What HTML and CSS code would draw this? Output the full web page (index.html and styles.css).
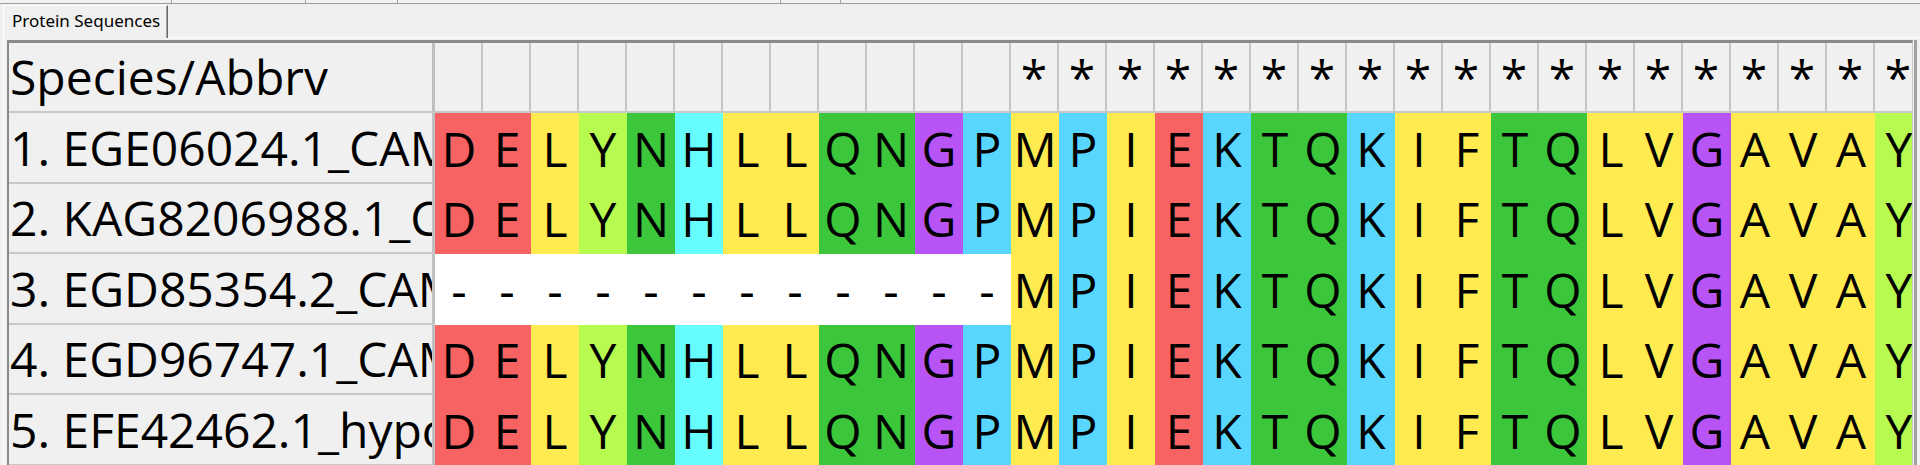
FILE: index.html
```html
<!DOCTYPE html>
<html>
<head>
<meta charset="utf-8">
<link rel="stylesheet" href="styles.css">
</head>
<body>
<div class="topstrip">
  <div class="seg s1"></div><div class="seg s2"></div><div class="seg s3"></div><div class="seg s4"></div><div class="seg s5"></div><div class="seg rest"></div>
</div>
<div class="tabbar">
  <div class="tab">Protein Sequences</div>
</div>
<div class="panel">
  <div class="grid">
    <div class="name hdr">Species/Abbrv</div>
    <div class="hc"></div><div class="hc"></div><div class="hc"></div><div class="hc"></div><div class="hc"></div><div class="hc"></div><div class="hc"></div><div class="hc"></div><div class="hc"></div><div class="hc"></div><div class="hc"></div><div class="hc"></div>
    <div class="hc">*</div><div class="hc">*</div><div class="hc">*</div><div class="hc">*</div><div class="hc">*</div><div class="hc">*</div><div class="hc">*</div><div class="hc">*</div><div class="hc">*</div><div class="hc">*</div><div class="hc">*</div><div class="hc">*</div><div class="hc">*</div><div class="hc">*</div><div class="hc">*</div><div class="hc">*</div><div class="hc">*</div><div class="hc">*</div><div class="hc">*</div>

    <div class="name">1. EGE06024.1_CAMK protein kinase</div>
    <div class="aa r">D</div><div class="aa r">E</div><div class="aa y">L</div><div class="aa yg">Y</div><div class="aa g">N</div><div class="aa c">H</div><div class="aa y">L</div><div class="aa y">L</div><div class="aa g">Q</div><div class="aa g">N</div><div class="aa p">G</div><div class="aa b">P</div><div class="aa y">M</div><div class="aa b">P</div><div class="aa y">I</div><div class="aa r">E</div><div class="aa b">K</div><div class="aa g">T</div><div class="aa g">Q</div><div class="aa b">K</div><div class="aa y">I</div><div class="aa y">F</div><div class="aa g">T</div><div class="aa g">Q</div><div class="aa y">L</div><div class="aa y">V</div><div class="aa p">G</div><div class="aa y">A</div><div class="aa y">V</div><div class="aa y">A</div><div class="aa yg">Y</div>

    <div class="name">2. KAG8206988.1_CAMK protein kinase</div>
    <div class="aa r">D</div><div class="aa r">E</div><div class="aa y">L</div><div class="aa yg">Y</div><div class="aa g">N</div><div class="aa c">H</div><div class="aa y">L</div><div class="aa y">L</div><div class="aa g">Q</div><div class="aa g">N</div><div class="aa p">G</div><div class="aa b">P</div><div class="aa y">M</div><div class="aa b">P</div><div class="aa y">I</div><div class="aa r">E</div><div class="aa b">K</div><div class="aa g">T</div><div class="aa g">Q</div><div class="aa b">K</div><div class="aa y">I</div><div class="aa y">F</div><div class="aa g">T</div><div class="aa g">Q</div><div class="aa y">L</div><div class="aa y">V</div><div class="aa p">G</div><div class="aa y">A</div><div class="aa y">V</div><div class="aa y">A</div><div class="aa yg">Y</div>

    <div class="name">3. EGD85354.2_CAMK protein kinase</div>
    <div class="aa w">-</div><div class="aa w">-</div><div class="aa w">-</div><div class="aa w">-</div><div class="aa w">-</div><div class="aa w">-</div><div class="aa w">-</div><div class="aa w">-</div><div class="aa w">-</div><div class="aa w">-</div><div class="aa w">-</div><div class="aa w">-</div><div class="aa y">M</div><div class="aa b">P</div><div class="aa y">I</div><div class="aa r">E</div><div class="aa b">K</div><div class="aa g">T</div><div class="aa g">Q</div><div class="aa b">K</div><div class="aa y">I</div><div class="aa y">F</div><div class="aa g">T</div><div class="aa g">Q</div><div class="aa y">L</div><div class="aa y">V</div><div class="aa p">G</div><div class="aa y">A</div><div class="aa y">V</div><div class="aa y">A</div><div class="aa yg">Y</div>

    <div class="name">4. EGD96747.1_CAMK protein kinase</div>
    <div class="aa r">D</div><div class="aa r">E</div><div class="aa y">L</div><div class="aa yg">Y</div><div class="aa g">N</div><div class="aa c">H</div><div class="aa y">L</div><div class="aa y">L</div><div class="aa g">Q</div><div class="aa g">N</div><div class="aa p">G</div><div class="aa b">P</div><div class="aa y">M</div><div class="aa b">P</div><div class="aa y">I</div><div class="aa r">E</div><div class="aa b">K</div><div class="aa g">T</div><div class="aa g">Q</div><div class="aa b">K</div><div class="aa y">I</div><div class="aa y">F</div><div class="aa g">T</div><div class="aa g">Q</div><div class="aa y">L</div><div class="aa y">V</div><div class="aa p">G</div><div class="aa y">A</div><div class="aa y">V</div><div class="aa y">A</div><div class="aa yg">Y</div>

    <div class="name">5. EFE42462.1_hypothetical protein</div>
    <div class="aa r">D</div><div class="aa r">E</div><div class="aa y">L</div><div class="aa yg">Y</div><div class="aa g">N</div><div class="aa c">H</div><div class="aa y">L</div><div class="aa y">L</div><div class="aa g">Q</div><div class="aa g">N</div><div class="aa p">G</div><div class="aa b">P</div><div class="aa y">M</div><div class="aa b">P</div><div class="aa y">I</div><div class="aa r">E</div><div class="aa b">K</div><div class="aa g">T</div><div class="aa g">Q</div><div class="aa b">K</div><div class="aa y">I</div><div class="aa y">F</div><div class="aa g">T</div><div class="aa g">Q</div><div class="aa y">L</div><div class="aa y">V</div><div class="aa p">G</div><div class="aa y">A</div><div class="aa y">V</div><div class="aa y">A</div><div class="aa yg">Y</div>
  </div>
  <div class="vedge"></div>
</div>
</body>
</html>
```

FILE: styles.css
```css
* { box-sizing: border-box; }
html, body { margin: 0; padding: 0; }
body {
  width: 1920px;
  height: 465px;
  overflow: hidden;
  background: #f0f0f0;
  font-family: "Open Sans", "Noto Sans", sans-serif;
  color: #000;
}

/* top header strip remnant */
.topstrip {
  display: flex;
  height: 4px;
  border-bottom: 1px solid #a0a0a0;
  background: #f2f2f2;
}
.topstrip .seg { border-right: 1px solid #a0a0a0; flex: none; }
.topstrip .s1 { width: 172px; }
.topstrip .s2 { width: 134px; }
.topstrip .s3 { width: 92px; }
.topstrip .s4 { width: 383px; }
.topstrip .s5 { width: 60px; }
.topstrip .rest { flex: 1; border-right: none; }

/* tab bar */
.tabbar {
  display: flex;
  align-items: flex-end;
  height: 33px;
  padding-left: 3px;
}
.tab {
  position: relative;
  z-index: 1;
  width: 165px;
  height: 33px;
  margin-bottom: -1px;
  background: #f0f0f0;
  border-top: 1px solid #ffffff;
  border-left: 1px solid #ffffff;
  border-right: 1px solid #696969;
  box-shadow: inset -1px 0 0 #a0a0a0;
  font-family: "Noto Sans", "Open Sans", sans-serif;
  font-size: 17px;
  line-height: 23px;
  padding: 3px 0 0 8px;
  white-space: nowrap;
  color: #000;
}

/* panel */
.panel {
  display: flex;
  margin-left: 3px;
  border-top: 1px solid #ffffff;
  border-left: 1px solid #ffffff;
  padding: 2px 0 0 3px;
  height: 428px;
}
.grid {
  flex: none;
  width: 1906px;
  height: 430px;
  overflow: hidden;
  border-top: 3px solid #8a8a8a;
  border-left: 2px solid #8a8a8a;
  border-right: 1px solid #c8c8c8;
  display: grid;
  grid-template-columns: 426px repeat(31, 48px);
  grid-template-rows: 70px 71px 70px 71px 70px 71px;
  font-size: 48px;
  background: #f0f0f0;
}
.vedge {
  flex: none;
  width: 3px;
  margin-left: 1px;
  background: #a0a0a0;
}

.name {
  background: #f0f0f0;
  border-right: 3px solid #c0c0c0;
  border-bottom: 2px solid #c8c8c8;
  padding-left: 1px;
  white-space: nowrap;
  overflow: hidden;
  display: flex;
  align-items: center;
  line-height: 1.362;
}
.hc {
  background: #f0f0f0;
  border-right: 2px solid #c6c6c6;
  border-bottom: 2px solid #c8c8c8;
  display: flex;
  justify-content: center;
  align-items: center;
  line-height: 1.362;
}
.aa {
  display: flex;
  justify-content: center;
  align-items: center;
  line-height: 1.362;
}

.r  { background: #f76262; }
.y  { background: #ffeb50; }
.yg { background: #b7fb50; }
.g  { background: #3cc63c; }
.c  { background: #66fdff; }
.p  { background: #b854f5; }
.b  { background: #58d6fd; }
.w  { background: #ffffff; }
```
